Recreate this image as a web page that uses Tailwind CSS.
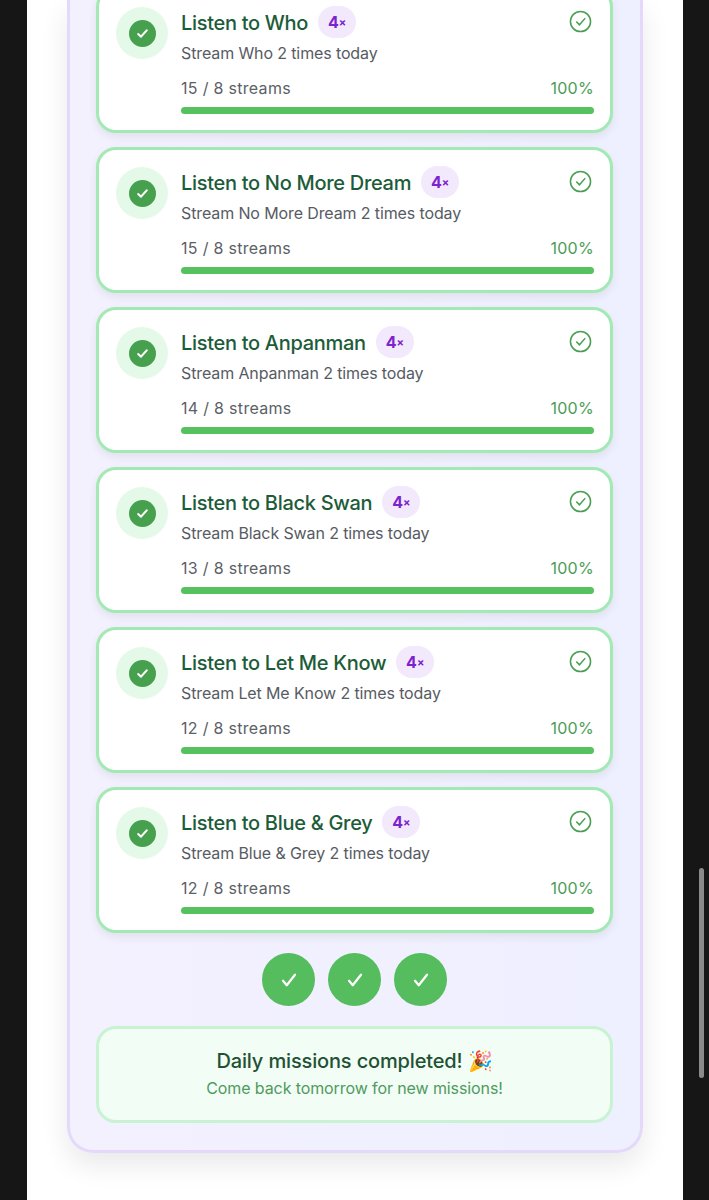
<!DOCTYPE html>
<html lang="en">
  <head>
    <meta charset="UTF-8" />
    <meta name="viewport" content="width=device-width, initial-scale=1.0" />
    <title>Daily Missions</title>
    <script src="https://cdn.jsdelivr.net/npm/@tailwindcss/browser@4"></script>
  </head>
  <body class="bg-[#161616] h-[1200px] overflow-hidden font-['Inter','Noto_Sans',sans-serif] relative">
    <!-- scrollbar -->
    <div class="absolute left-[699px] top-[868px] w-[5px] h-[210px] rounded-full bg-[#8a8a8a]"></div>

    <div class="ml-[27px] w-[656px] h-[1200px] bg-white overflow-hidden">
      <div class="ml-[40px] w-[576px] h-[1153px] rounded-b-[26px] border-[3px] border-t-0 border-[#e4d9fb] bg-gradient-to-r from-[#f4f1ff] to-[#eeefff] shadow-[0_12px_28px_rgba(0,0,0,0.09)] pl-[26px] pr-[27px] overflow-hidden">
        <div id="missions" class="flex flex-col gap-[14px] mt-[-13px]"></div>

        <!-- Streak dots -->
        <div class="mt-[20px] flex justify-center gap-[13px]">
          <div class="w-[53px] h-[53px] rounded-full bg-[#56bd5e] flex items-center justify-center">
            <svg width="18" height="18" viewBox="0 0 24 24" fill="none" stroke="#fff" stroke-width="3" stroke-linecap="round" stroke-linejoin="round"><path d="M4 13l5 6L20 5"/></svg>
          </div>
          <div class="w-[53px] h-[53px] rounded-full bg-[#56bd5e] flex items-center justify-center">
            <svg width="18" height="18" viewBox="0 0 24 24" fill="none" stroke="#fff" stroke-width="3" stroke-linecap="round" stroke-linejoin="round"><path d="M4 13l5 6L20 5"/></svg>
          </div>
          <div class="w-[53px] h-[53px] rounded-full bg-[#56bd5e] flex items-center justify-center">
            <svg width="18" height="18" viewBox="0 0 24 24" fill="none" stroke="#fff" stroke-width="3" stroke-linecap="round" stroke-linejoin="round"><path d="M4 13l5 6L20 5"/></svg>
          </div>
        </div>

        <!-- Completed banner -->
        <div class="mt-[20px] h-[97px] pb-[2px] rounded-[20px] border-[3px] border-[#c7f3d3] bg-[#f2fdf5] flex flex-col items-center justify-center text-center">
          <div class="text-[20px] leading-[28px] font-[550] tracking-[-0.15px] text-[#1f5233]">Daily missions completed! 🎉</div>
          <div class="mt-[1px] text-[16px] leading-[24px] tracking-[-0.1px] text-[#4f9a5f]">Come back tomorrow for new missions!</div>
        </div>
      </div>
    </div>

    <script>
      const missions = [
        ["Who", 15],
        ["No More Dream", 15],
        ["Anpanman", 14],
        ["Black Swan", 13],
        ["Let Me Know", 12],
        ["Blue &amp; Grey", 12],
      ];

      document.getElementById("missions").innerHTML = missions
        .map(
          ([song, count]) => `
          <div class="h-[146px] rounded-[20px] border-[3px] border-[#a3e9b4] bg-white shadow-[0_4px_10px_rgba(0,0,0,0.07)] pl-[17px] pr-[16px] pt-[17px] flex gap-[13px]">
            <div class="w-[52px] h-[52px] shrink-0 rounded-full bg-[#e5f9e9] flex items-center justify-center">
              <div class="w-[27px] h-[27px] rounded-full bg-[#46a04e] flex items-center justify-center">
                <svg width="13" height="13" viewBox="0 0 24 24" fill="none" stroke="#fff" stroke-width="3.5" stroke-linecap="round" stroke-linejoin="round"><path d="M4 13l5 5L20 6"/></svg>
              </div>
            </div>
            <div class="flex-1 min-w-0">
              <div class="flex items-center h-[32px] mt-[-1px]">
                <span class="mt-[2px] text-[20px] font-[550] tracking-[-0.3px] text-[#1c5c38]">Listen to ${song}</span>
                <span class="ml-[10px] w-[38px] h-[32px] rounded-full bg-[#f2e9fd] flex items-center justify-center text-[16px] font-bold text-[#7e22ce]">4<span class="text-[11px]">×</span></span>
                <svg class="ml-auto mr-[2px] mt-[-1px]" width="23" height="23" viewBox="0 0 24 24" fill="none" stroke="#4a9f55" stroke-width="1.6" stroke-linecap="round" stroke-linejoin="round"><circle cx="12" cy="12" r="10.5"/><path d="M8 12.5l3 3 5.5-6.5"/></svg>
              </div>
              <div class="mt-[3px] text-[16px] leading-[24px] tracking-[-0.12px] text-[#575b63]">Stream ${song} 2 times today</div>
              <div class="mt-[11px] flex justify-between text-[16px] leading-[24px] tracking-[0.3px] text-[#5b5f66]">
                <span>${count} / 8 streams</span>
                <span class="text-[#4b9c58]">100%</span>
              </div>
              <div class="mt-[7px] h-[7px] rounded-full bg-[#56c25f]"></div>
            </div>
          </div>`
        )
        .join("");
    </script>
  </body>
</html>
